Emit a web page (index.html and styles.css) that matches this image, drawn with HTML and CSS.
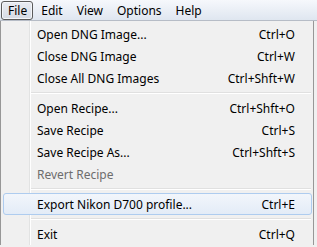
FILE: index.html
```html
<!DOCTYPE html>
<html lang="en">
<head>
    <meta charset="UTF-8">
    <title>File menu</title>
    <link rel="stylesheet" href="styles.css">
</head>
<body>
    <div class="menubar">
        <span class="menubar-item open">File</span>
        <span class="menubar-item">Edit</span>
        <span class="menubar-item">View</span>
        <span class="menubar-item">Options</span>
        <span class="menubar-item">Help</span>
    </div>

    <div class="menu">
        <div class="menu-item"><span class="label">Open DNG Image...</span><span class="key">Ctrl+O</span></div>
        <div class="menu-item"><span class="label">Close DNG Image</span><span class="key">Ctrl+W</span></div>
        <div class="menu-item"><span class="label">Close All DNG Images</span><span class="key">Ctrl+Shft+W</span></div>
        <div class="separator"></div>
        <div class="menu-item"><span class="label">Open Recipe...</span><span class="key">Ctrl+Shft+O</span></div>
        <div class="menu-item"><span class="label">Save Recipe</span><span class="key">Ctrl+S</span></div>
        <div class="menu-item"><span class="label">Save Recipe As...</span><span class="key">Ctrl+Shft+S</span></div>
        <div class="menu-item disabled"><span class="label">Revert Recipe</span><span class="key"></span></div>
        <div class="separator"></div>
        <div class="menu-item hover"><span class="label">Export Nikon D700 profile...</span><span class="key">Ctrl+E</span></div>
        <div class="separator"></div>
        <div class="menu-item"><span class="label">Exit</span><span class="key">Ctrl+Q</span></div>
    </div>
</body>
</html>
```

FILE: styles.css
```css
body {
    margin: 0;
    font-family: "Noto Sans", "Open Sans", sans-serif;
    font-size: 12px;
    color: #000;
    background-color: #f0f0f0;
}

.menubar {
    display: flex;
    height: 20px;
    align-items: center;
    padding-left: 1px;
    background: linear-gradient(#f6f8fc, #dfe6f0);
    border-bottom: 1px solid #b6bcc6;
}

.menubar-item {
    padding: 0 5px 0 6px;
    margin-right: 1px;
    height: 17px;
    line-height: 17px;
    border: 1px solid transparent;
    border-radius: 3px;
}

.menubar-item.open {
    border-color: #5b5b5b;
    background: linear-gradient(#e9ecf2, #d6dbe4);
    box-shadow: inset 0 0 0 1px #f4f6fa;
}

.menu {
    position: relative;
    width: 314px;
    padding: 2px 0 0 2px;
    border-left: 1px solid #979797;
    border-right: 1px solid #979797;
    background-color: #f0f0f0;
    box-sizing: border-box;
}

.menu::before {
    content: '';
    position: absolute;
    top: 0;
    bottom: 0;
    left: 28px;
    width: 1px;
    background-color: #e2e3e3;
    border-right: 1px solid #fff;
}

.menu-item {
    display: flex;
    justify-content: space-between;
    height: 22px;
    line-height: 22px;
    padding: 0 16px 0 33px;
    margin-right: 1px;
    border: 1px solid transparent;
    border-radius: 3px;
    box-sizing: border-box;
}

.menu-item.disabled {
    color: #6d6d6d;
}

.menu-item.hover {
    position: relative;
    border-color: #aeccef;
    background: linear-gradient(#f2f6fb, #e3ecf7);
}

.separator {
    height: 1px;
    margin: 3px 2px 3px 28px;
    background-color: #e0e0e0;
    border-bottom: 1px solid #fff;
}
```
